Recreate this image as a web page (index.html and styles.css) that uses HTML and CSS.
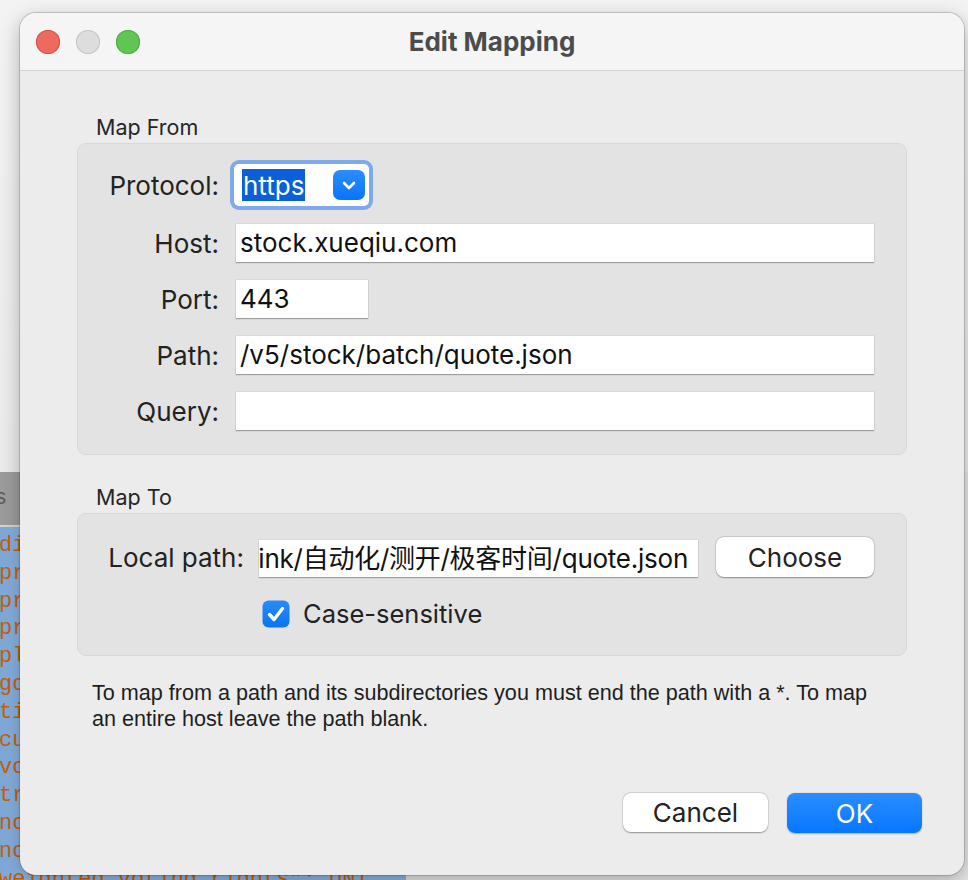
FILE: index.html
```html
<!DOCTYPE html>
<html lang="en">
<head>
<meta charset="utf-8">
<title>Edit Mapping</title>
<link rel="stylesheet" href="styles.css">
</head>
<body>
<div class="desktop">
  <div class="top-area"></div>
  <div class="lower">
    <div class="editor">
      <div class="editor-tab">s</div>
      <div class="editor-code">
        <div class="code-line">dividend": 0.88,</div>
        <div class="code-line">profit": 3.2E9,</div>
        <div class="code-line">profit_four": 1.5E9,</div>
        <div class="code-line">pre_close": 36.45,</div>
        <div class="code-line">pledge_ratio": null,</div>
        <div class="code-line">goodwill": null,</div>
        <div class="code-line">timestamp": 1612,</div>
        <div class="code-line">currency": "CNY",</div>
        <div class="code-line">volume": 102300,</div>
        <div class="code-line">traded_amount": 0,</div>
        <div class="code-line">no_profit": "N",</div>
        <div class="code-line">no_profit_desc": null,</div>
        <div class="code-line">weighted_voting_rights": UNI</div>
      </div>
    </div>
    <div class="lower-rest"></div>
  </div>
</div>

<div class="window">
  <div class="titlebar">
    <div class="lights">
      <span class="light light-close"></span>
      <span class="light light-min"></span>
      <span class="light light-max"></span>
    </div>
    <div class="title">Edit Mapping</div>
    <div></div>
  </div>

  <div class="content">
    <div class="section-label">Map From</div>
    <div class="group group-from">
      <div class="field-label">Protocol:</div>
      <div class="select">
        <span class="select-value">https</span>
        <span class="select-btn">
          <svg width="32" height="30" viewBox="0 0 32 30"><path d="M11 13 L16 18 L21 13" fill="none" stroke="#fff" stroke-width="2.6" stroke-linecap="round" stroke-linejoin="round"/></svg>
        </span>
      </div>

      <div class="field-label">Host:</div>
      <div class="input">stock.xueqiu.com</div>

      <div class="field-label">Port:</div>
      <div class="input input-port">443</div>

      <div class="field-label">Path:</div>
      <div class="input">/v5/stock/batch/quote.json</div>

      <div class="field-label">Query:</div>
      <div class="input"></div>
    </div>

    <div class="section-label section-label-to">Map To</div>
    <div class="group group-to">
      <div class="to-row">
        <div class="field-label to-label">Local path:</div>
        <div class="input input-local"><span class="local-text">ink/自动化/测开/极客时间/quote.json</span></div>
        <button class="btn btn-choose">Choose</button>
      </div>
      <label class="check-row">
        <svg class="checkbox" width="28" height="28" viewBox="0 0 28 28">
          <defs><linearGradient id="cb" x1="0" y1="0" x2="0" y2="1"><stop offset="0" stop-color="#2a8bfb"/><stop offset="1" stop-color="#0a74f2"/></linearGradient></defs>
          <rect x="0.5" y="0.5" width="27" height="27" rx="6" fill="url(#cb)"/>
          <path d="M7.5 14.5 L12 19.5 L20.5 8.5" fill="none" stroke="#fff" stroke-width="3.4" stroke-linecap="round" stroke-linejoin="round"/>
        </svg>
        <span class="check-text">Case-sensitive</span>
      </label>
    </div>

    <p class="help">To map from a path and its subdirectories you must end the path with a *. To map an entire host leave the path blank.</p>
  </div>

  <div class="footer">
    <button class="btn btn-cancel">Cancel</button>
    <button class="btn btn-ok">OK</button>
  </div>
</div>
</body>
</html>
```

FILE: styles.css
```css
* { box-sizing: border-box; }
html, body { margin: 0; padding: 0; }
body {
  width: 968px;
  height: 880px;
  overflow: hidden;
  position: relative;
  font-family: Inter, "Noto Sans CJK SC", sans-serif;
  color: #262626;
}

/* background app */
.desktop { width: 968px; height: 880px; display: flex; flex-direction: column; }
.top-area { height: 472px; background: linear-gradient(#f3f3f3, #ebebeb); }
.lower { flex: 1; display: flex; min-height: 0; }
.editor { width: 406px; display: flex; flex-direction: column; }
.editor-tab {
  height: 55px;
  background: #9c9c9c;
  border-bottom: 2px solid #d6d6d6;
  color: #5a5a5a;
  font: 22px/53px "Liberation Mono", monospace;
  text-indent: -6px;
}
.editor-code {
  flex: 1;
  background: linear-gradient(90deg, #7ea7d6 0, #8db5e3 24px, #8db5e3 100%);
  font: 22px/27.8px "Liberation Mono", monospace;
  color: #c4610c;
  padding-top: 5px;
  white-space: nowrap;
  overflow: hidden;
}
.code-line { margin-left: -1px; }
.lower-rest { flex: 1; background: #e6e6e6; }

/* window */
.window {
  position: absolute;
  left: 20px;
  top: 13px;
  width: 944px;
  height: 862px;
  border-radius: 16px;
  background: #ececec;
  box-shadow: 0 0 0 1px rgba(0,0,0,0.16), 0 6px 20px rgba(0,0,0,0.28);
  overflow: hidden;
  display: flex;
  flex-direction: column;
}
.titlebar {
  height: 58px;
  background: #f5f5f5;
  border-bottom: 1px solid #d3d3d3;
  display: grid;
  grid-template-columns: 1fr auto 1fr;
  align-items: center;
}
.lights { display: flex; gap: 16px; padding-left: 16px; }
.light { width: 24px; height: 24px; border-radius: 50%; display: block; }
.light-close { background: #ee6a5f; box-shadow: inset 0 0 0 1px #d8544a; }
.light-min { background: #dddddd; box-shadow: inset 0 0 0 1px #c6c6c6; }
.light-max { background: #61c554; box-shadow: inset 0 0 0 1px #4fad43; }
.title {
  font-weight: 700;
  font-size: 26px;
  color: #4c4c4c;
}

.content { padding: 42px 57px 0 57px; display: flex; flex-direction: column; }
.section-label {
  font-size: 21.5px;
  line-height: 28px;
  padding-left: 19px;
  margin-bottom: 2px;
  color: #262626;
}
.section-label-to { margin-top: 28px; }

.group {
  background: #e3e3e3;
  border: 1px solid #d8d8d8;
  border-radius: 9px;
}
.group-from {
  display: grid;
  grid-template-columns: 141px 1fr;
  grid-template-rows: 41px 38px 38px 38px 38px;
  column-gap: 17px;
  row-gap: 18px;
  padding: 21px 32px 24px 0;
}
.field-label {
  text-align: right;
  align-self: center;
  font-size: 26px;
  color: #222;
}
.input {
  background: #fff;
  height: 38px;
  box-shadow: 0 1px 1px rgba(0,0,0,0.28), 0 0 0 0.5px rgba(0,0,0,0.08);
  font-size: 26px;
  line-height: 38px;
  padding-left: 4px;
  color: #111;
  white-space: nowrap;
  overflow: hidden;
}
.input-port { width: 132px; }

.select {
  width: 135px;
  height: 42px;
  margin-left: -2px;
  margin-top: -1px;
  background: #fff;
  border-radius: 5px;
  box-shadow: 0 0 0 4px #7eaaec;
  display: flex;
  align-items: center;
  justify-content: space-between;
  padding: 0 4px 0 8px;
}
.select-value {
  background: #0b5fd8;
  color: #fff;
  font-size: 26px;
  line-height: 32px;
  height: 32px;
  padding: 1px 1px 0;
}
.select-btn {
  width: 32px;
  height: 30px;
  border-radius: 7px;
  background: linear-gradient(#2b8efe, #0a73fa);
  display: block;
}
.select-btn svg { display: block; }

.group-to {
  display: flex;
  flex-direction: column;
  padding: 23px 32px 26px 0;
}
.to-row { display: flex; align-items: center; }
.to-label { width: 166px; flex: none; }
.input-local {
  width: 439px;
  flex: none;
  height: 37px;
  line-height: 37px;
  margin-left: 15px;
  margin-top: 3px;
  padding: 0 10px 0 0;
  display: flex;
  justify-content: flex-end;
}
.local-text { flex: none; letter-spacing: -0.25px; }
.btn {
  font-family: Inter, sans-serif;
  font-size: 26px;
  border: none;
  border-radius: 8px;
  background: #fff;
  color: #222;
  box-shadow: 0 0.5px 1.5px rgba(0,0,0,0.35), 0 0 0 0.5px rgba(0,0,0,0.1);
  padding: 0;
}
.btn-choose { width: 158px; height: 40px; margin-left: 18px; }

.check-row {
  display: flex;
  align-items: center;
  margin-top: 21px;
  margin-left: 184px;
}
.checkbox { display: block; flex: none; }
.check-text { font-size: 25.5px; margin-left: 13px; color: #222; }

.help {
  margin: 24px 0 0 15px;
  font-family: "Liberation Sans", Arial, sans-serif;
  font-size: 21.6px;
  line-height: 26px;
  color: #1e1e1e;
  width: 800px;
}

.footer {
  margin-top: auto;
  display: flex;
  justify-content: flex-end;
  gap: 19px;
  padding: 0 42px 42px 0;
}
.btn-cancel { width: 145px; height: 39px; }
.btn-ok {
  width: 135px;
  height: 40px;
  color: #fff;
  background: linear-gradient(#2a8dff, #0777ff);
  box-shadow: 0 0.5px 1.5px rgba(0,0,0,0.25);
}
```
